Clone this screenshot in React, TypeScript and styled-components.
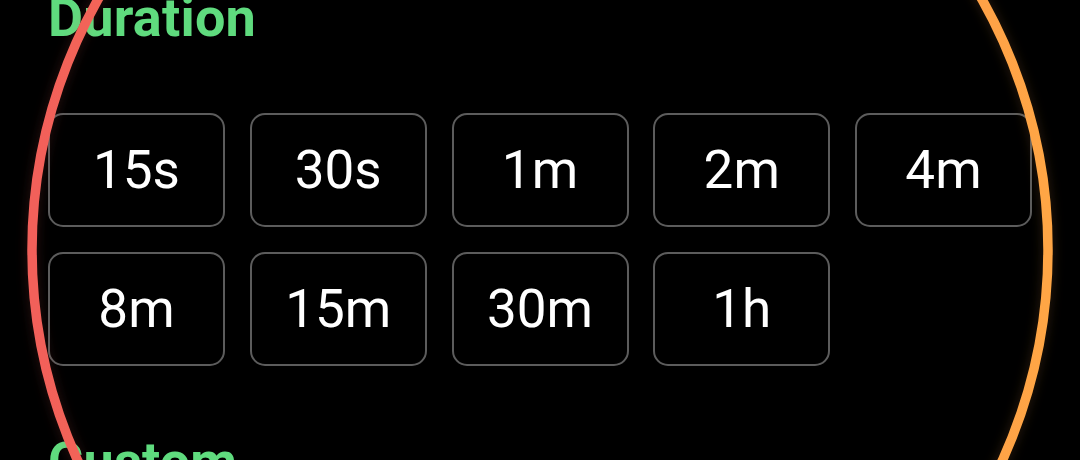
import React from "react";
import styled, { createGlobalStyle } from "styled-components";

const Global = createGlobalStyle`
  html, body {
    margin: 0;
    padding: 0;
    background: #000;
    overflow: hidden;
  }
  * { box-sizing: border-box; }
`;

const Screen = styled.div`
  position: relative;
  width: 1080px;
  height: 460px;
  background: #000;
  overflow: hidden;
  font-family: Roboto, "Noto Sans", sans-serif;
`;

const Content = styled.div`
  display: flex;
  flex-direction: column;
  padding: 0 48px;
  margin-top: -12px;
`;

const Heading = styled.h2<{ $gap: number }>`
  margin: 0 0 ${(p) => p.$gap}px 0;
  font-family: Roboto, "Noto Sans", sans-serif;
  font-size: 54px;
  line-height: 60px;
  font-weight: 700;
  color: #5fdb7e;
  letter-spacing: 0.2px;
`;

const Grid = styled.div`
  display: grid;
  grid-template-columns: repeat(5, 177px);
  column-gap: 24.75px;
  row-gap: 25px;
  margin-bottom: 66px;
`;

const Chip = styled.button`
  height: 114px;
  display: flex;
  align-items: center;
  justify-content: center;
  background: transparent;
  border: 2.5px solid #5c5c5c;
  border-radius: 15px;
  color: #ffffff;
  font-family: Roboto, "Noto Sans", sans-serif;
  font-size: 53px;
  font-weight: 400;
  padding: 0;
`;

const Ring = styled.svg`
  position: absolute;
  left: 0;
  top: 0;
  width: 1080px;
  height: 460px;
  pointer-events: none;
  overflow: visible;
`;

const durations = ["15s", "30s", "1m", "2m", "4m", "8m", "15m", "30m", "1h"];

export default function App() {
  return (
    <>
      <Global />
      <Screen>
        <Content>
          <Heading $gap={65}>Duration</Heading>
          <Grid>
            {durations.map((d) => (
              <Chip key={d}>{d}</Chip>
            ))}
          </Grid>
          <Heading $gap={0}>Custom</Heading>
        </Content>
        <Ring viewBox="0 0 1080 460">
          <defs>
            <linearGradient id="ringGrad" x1="32" y1="0" x2="1048" y2="0" gradientUnits="userSpaceOnUse">
              <stop offset="0" stopColor="#f2605a" />
              <stop offset="0.5" stopColor="#f8834e" />
              <stop offset="1" stopColor="#ffa645" />
            </linearGradient>
            <filter id="glow" x="-10%" y="-10%" width="120%" height="120%">
              <feGaussianBlur stdDeviation="6" result="b" />
              <feColorMatrix in="b" type="matrix" values="1 0 0 0 0  0 1 0 0 0  0 0 1 0 0  0 0 0 0.18 0" result="g" />
              <feMerge>
                <feMergeNode in="g" />
                <feMergeNode in="SourceGraphic" />
              </feMerge>
            </filter>
          </defs>
          <circle cx="540" cy="250" r="508" fill="none" stroke="url(#ringGrad)" strokeWidth="9.5" filter="url(#glow)" />
        </Ring>
      </Screen>
    </>
  );
}
